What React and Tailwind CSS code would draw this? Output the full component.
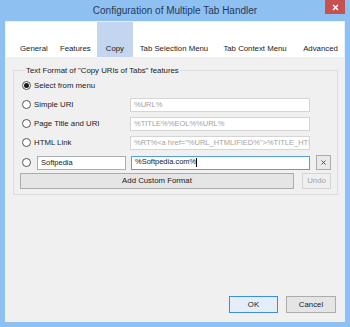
import React from "react";

const font = { fontFamily: '"Liberation Sans", Arial, sans-serif' };

function Radio({ checked }) {
  return (
    <span className="w-[9px] h-[9px] rounded-full border border-[#555] bg-white flex items-center justify-center shrink-0">
      {checked && <span className="w-[5px] h-[5px] rounded-full bg-[#1a1a1a]" />}
    </span>
  );
}

function Field({ value, disabled, w, focus }) {
  return (
    <div
      className={`h-[14px] ${w} border bg-white flex items-center px-[3px] text-[7.5px] leading-none whitespace-nowrap overflow-hidden ${
        focus ? "border-[#569de5] text-[#1a1a1a]" : disabled ? "border-[#d5d5d5] text-[#a3a3a3]" : "border-[#abadb3] text-[#1a1a1a]"
      }`}
    >
      {value}
    </div>
  );
}

export default function App() {
  const tabs = [
    { t: "General", w: "w-[48px]", pl: "pl-[14px]" },
    { t: "Features", w: "w-[43px]", pl: "pl-[6px]" },
    { t: "Copy", w: "w-[36px]", pl: "pl-[9px]", sel: true },
    { t: "Tab Selection Menu", w: "w-[85px]", pl: "pl-[7px]" },
    { t: "Tab Context Menu", w: "w-[79px]", pl: "pl-[6px]" },
    { t: "Advanced", w: "w-[48px]", pl: "pl-[7px]" },
  ];
  return (
    <div className="w-[350px] h-[327px] bg-[#8fc0f2] flex flex-col overflow-hidden text-[#1a1a1a]" style={font}>
      <div className="h-[21px] shrink-0 relative flex items-center justify-center">
        <span className="text-[10px] text-[#24395a] leading-none mt-[1px]">Configuration of Multiple Tab Handler</span>
        <div className="absolute right-[5px] top-0 w-[20px] h-[14px] bg-[#c75050] flex items-center justify-center">
          <svg width="7" height="7" viewBox="0 0 7 7">
            <path d="M1 1L6 6M6 1L1 6" stroke="white" strokeWidth="1.4" />
          </svg>
        </div>
      </div>
      <div className="ml-[5px] w-[340px] flex-1 mb-[5px] border border-[#e8f0fa] flex flex-col">
        <div className="h-[35px] bg-white flex items-stretch shrink-0">
          {tabs.map((tab) => (
            <div
              key={tab.t}
              className={`${tab.w} ${tab.pl} flex items-end pb-[4px] text-[7.8px] leading-none whitespace-nowrap ${
                tab.sel ? "bg-[#c3d5ef]" : ""
              }`}
            >
              {tab.t}
            </div>
          ))}
        </div>
        <div className="flex-1 bg-[#f0f0f0] flex flex-col pl-[7px] pr-[8px] pb-[8px]">
          <fieldset className="mt-[8px] border border-[#dcdcdc] pl-[6px] pr-[6px] pb-[5px]">
            <legend className="ml-[5px] px-[1px] text-[7.8px] leading-[11px]">
              Text Format of "Copy URIs of Tabs" features
            </legend>
            <div className="flex flex-col text-[7.8px] leading-none">
              <div className="h-[19px] flex items-center pl-[2px]">
                <Radio checked />
                <span className="ml-[3px]">Select from menu</span>
              </div>
              <div className="h-[19px] flex items-center pl-[2px]">
                <Radio />
                <span className="ml-[3px] w-[96px]">Simple URI</span>
                <Field value="%URL%" disabled w="w-[180px]" />
              </div>
              <div className="h-[19px] flex items-center pl-[2px]">
                <Radio />
                <span className="ml-[3px] w-[96px]">Page Title and URI</span>
                <Field value="%TITLE%%EOL%%URL%" disabled w="w-[180px]" />
              </div>
              <div className="h-[19px] flex items-center pl-[2px]">
                <Radio />
                <span className="ml-[3px] w-[96px]">HTML Link</span>
                <Field value={'%RT%<a href="%URL_HTMLIFIED%">%TITLE_HTMLIFIED%</a>'} disabled w="w-[180px]" />
              </div>
              <div className="h-[21px] flex items-center pl-[2px]">
                <Radio />
                <div className="ml-[6px]">
                  <Field value="Softpedia" w="w-[89px]" />
                </div>
                <div className="ml-[5px]">
                  <Field value={<span>%Softpedia.com%<span className="inline-block w-[1px] h-[9px] bg-black align-middle" /></span>} focus w="w-[179px]" />
                </div>
                <div className="ml-[6px] w-[15px] h-[15px] border border-[#acacac] bg-[#e9e9e9] flex items-center justify-center">
                  <svg width="5" height="5" viewBox="0 0 5 5">
                    <path d="M0.5 0.5L4.5 4.5M4.5 0.5L0.5 4.5" stroke="#444" strokeWidth="0.9" />
                  </svg>
                </div>
              </div>
              <div className="h-[16px] flex items-stretch gap-[8px]">
                <div className="w-[274px] border border-[#acacac] bg-[#e5e5e5] flex items-center justify-center">
                  Add Custom Format
                </div>
                <div className="w-[29px] border border-[#d5d5d5] bg-[#efefef] text-[#a3a3a3] flex items-center justify-center">
                  Undo
                </div>
              </div>
            </div>
          </fieldset>
          <div className="mt-auto flex justify-end gap-[8px] text-[7.8px] leading-none">
            <div className="w-[49px] h-[17px] border border-[#3c8ee0] bg-[#e5eef8] flex items-center justify-center">
              OK
            </div>
            <div className="w-[50px] h-[17px] border border-[#acacac] bg-[#e5e5e5] flex items-center justify-center">
              Cancel
            </div>
          </div>
        </div>
      </div>
    </div>
  );
}
